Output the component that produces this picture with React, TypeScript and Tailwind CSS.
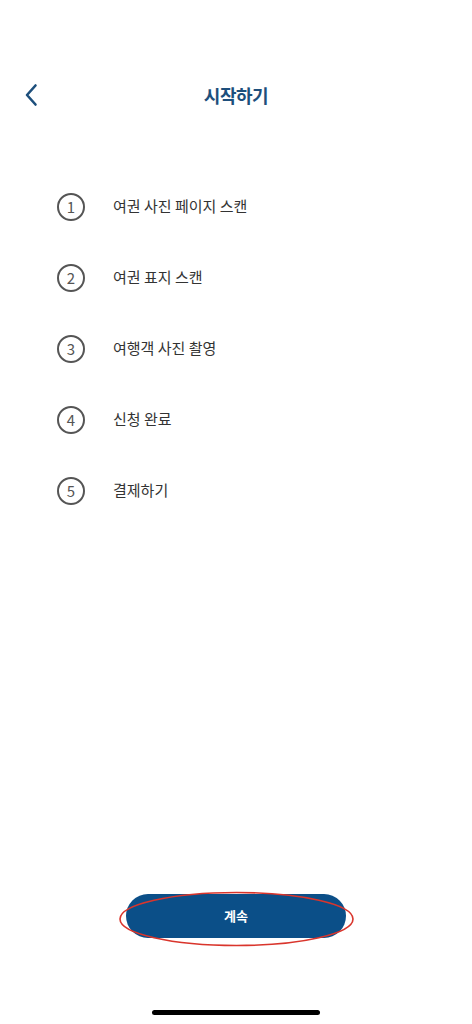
import React from 'react';

const steps = ['여권 사진 페이지 스캔', '여권 표지 스캔', '여행객 사진 촬영', '신청 완료', '결제하기'];

const App: React.FC = () => {
  return (
    <div
      className="w-[472px] h-[1024px] bg-white flex flex-col overflow-hidden"
      style={{ fontFamily: '"Noto Sans CJK KR", "Noto Sans", sans-serif' }}
    >
      {/* Header */}
      <div className="relative flex items-center justify-center h-11 mt-[73px] shrink-0">
        <button className="absolute left-[20px] top-1/2 -translate-y-1/2 p-1 text-[#1d4f7c]">
          <svg width="14" height="24" viewBox="0 0 14 24" fill="none">
            <path d="M11.5 2.5 L3 12 L11.5 21.5" stroke="currentColor" strokeWidth="2.6" strokeLinecap="round" strokeLinejoin="round" />
          </svg>
        </button>
        <h1 className="text-[18px] font-bold text-[#1d4f7c] tracking-tight">시작하기</h1>
      </div>

      {/* Steps */}
      <div className="flex flex-col mt-[54px] pl-[57px]">
        {steps.map((s, i) => (
          <div key={s} className="flex items-center h-[71px]">
            <div className="w-[28px] h-[28px] rounded-full border-2 border-[#555] flex items-center justify-center text-[15px] text-[#555] leading-none">
              {i + 1}
            </div>
            <span className="ml-[28px] text-[15px] text-[#333]">{s}</span>
          </div>
        ))}
      </div>

      {/* Bottom */}
      <div className="mt-auto flex flex-col items-center">
        <div className="relative">
          <button className="w-[220px] h-[44px] rounded-[22px] bg-[#0b4f88] text-white text-[13px] font-bold">
            계속
          </button>
          <svg className="absolute left-[-8px] top-[-3px] pointer-events-none" width="237" height="56" viewBox="0 0 237 56">
            <ellipse cx="118.5" cy="28" rx="116.5" ry="26.5" fill="none" stroke="#d9352c" strokeWidth="1.6" />
          </svg>
        </div>
        <div className="w-[168px] h-[5px] rounded-full bg-black mt-[72px] mb-[9px]" />
      </div>
    </div>
  );
};

export default App;
